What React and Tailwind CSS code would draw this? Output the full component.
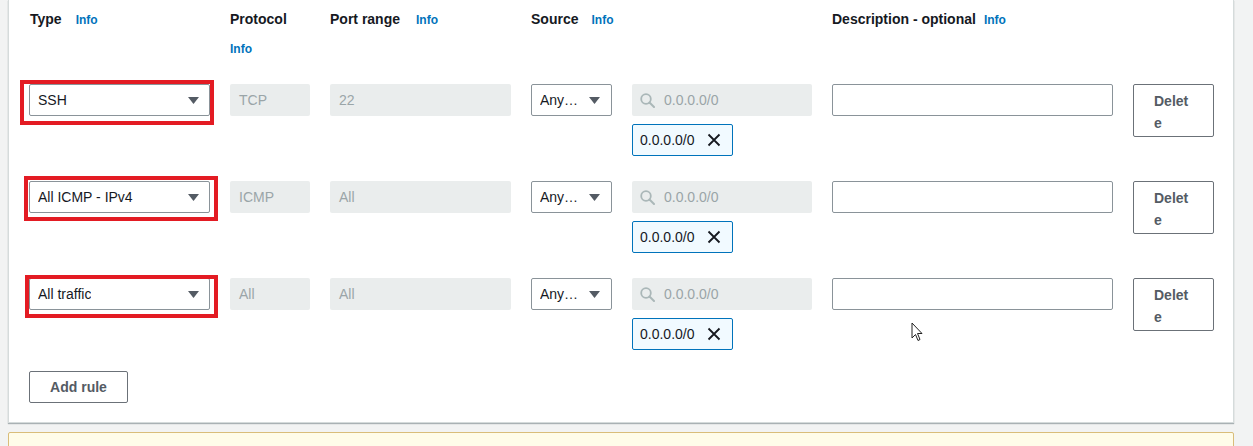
import React from 'react';

const rules = [
  { type: 'SSH', protocol: 'TCP', port: '22', red: 'left-[-9px] top-[-4px] w-[194px] h-[45px]' },
  { type: 'All ICMP - IPv4', protocol: 'ICMP', port: 'All', red: 'left-[-5px] top-[-5px] w-[194px] h-[45px]' },
  { type: 'All traffic', protocol: 'All', port: 'All', red: 'left-[-4px] top-[-3px] w-[193px] h-[43px]' },
];

const Caret = () => (
  <svg width="11" height="7" viewBox="0 0 11 7" className="shrink-0">
    <path d="M0 0 L11 0 L5.5 7 Z" fill="#545b64" />
  </svg>
);

const Info = ({ className = '' }) => (
  <span className={`text-[12px] font-bold text-[#0073bb] ${className}`}>Info</span>
);

const Select = ({ value, className = '' }) => (
  <div className={`h-[32px] flex items-center justify-between border border-[#8a9399] rounded-[2px] bg-white pl-[8px] text-[14px] text-[#16191f] ${className}`}>
    <span className="whitespace-nowrap overflow-hidden">{value}</span>
    <Caret />
  </div>
);

const Disabled = ({ value }) => (
  <div className="h-[32px] flex items-center bg-[#eaeded] rounded-[2px] pl-[9px] text-[14px] text-[#9aa5a8]">
    {value}
  </div>
);

const RuleRow = ({ rule }) => (
  <div className="grid grid-cols-[181px_80px_181px_81px_180px_281px_81px] gap-x-[20px] items-start">
    <div className="relative">
      <Select value={rule.type} className="pr-[10px]" />
      <div className={`absolute border-4 border-[#e31b23] pointer-events-none ${rule.red}`} />
    </div>
    <Disabled value={rule.protocol} />
    <Disabled value={rule.port} />
    <Select value="Any…" className="pr-[11px] gap-[4px]" />
    <div className="flex flex-col">
      <div className="h-[32px] flex items-center bg-[#eaeded] rounded-[2px] pl-[8px] text-[14px] text-[#9aa5a8]">
        <svg width="15" height="15" viewBox="0 0 15 15" className="mr-[9px]">
          <circle cx="6" cy="6" r="4.8" fill="none" stroke="#aab7b8" strokeWidth="1.8" />
          <path d="M9.5 9.5 L14 14" stroke="#aab7b8" strokeWidth="2" strokeLinecap="round" />
        </svg>
        0.0.0.0/0
      </div>
      <div className="mt-[8px] w-[101px] h-[32px] flex items-center border border-[#0073bb] rounded-[2px] bg-[#f1faff] pl-[7px] text-[14px] text-[#16191f]">
        0.0.0.0/0
        <svg width="14" height="14" viewBox="0 0 14 14" className="ml-[12px]">
          <path d="M1.5 1.5 L12.5 12.5 M12.5 1.5 L1.5 12.5" stroke="#16191f" strokeWidth="1.8" />
        </svg>
      </div>
    </div>
    <div className="h-[32px] border border-[#8a9399] rounded-[2px] bg-white" />
    <button className="h-[53px] w-[81px] border border-[#6b7178] rounded-[2px] bg-white pl-[20px] pr-[18px] pt-[5px] pb-[2px] text-left text-[14px] leading-[22px] font-bold text-[#545b64] break-all">
      Delete
    </button>
  </div>
);

export default function App() {
  return (
    <div className="min-h-[446px] bg-[#f2f3f3] pl-[8px] pr-[19px] font-['Liberation_Sans',Arial,sans-serif] leading-[20px] overflow-hidden">
      <div className="relative bg-white border-x border-b border-[#d5dbdb] shadow-[0_1px_1px_0_rgba(0,28,36,0.3)] pl-[20px] pb-[19px]">
        <div className="grid grid-cols-[181px_80px_181px_81px_180px_281px_81px] gap-x-[20px] pt-[9px] mb-[25px] text-[14px] font-bold text-[#16191f]">
          <div className="flex items-baseline pl-[1px]">
            <span>Type</span>
            <Info className="ml-[14px]" />
          </div>
          <div className="flex flex-col">
            <span>Protocol</span>
            <Info className="mt-[10px]" />
          </div>
          <div className="flex items-baseline">
            <span>Port range</span>
            <Info className="ml-[16px]" />
          </div>
          <div className="flex items-baseline col-span-2">
            <span>Source</span>
            <Info className="ml-[13px]" />
          </div>
          <div className="flex items-baseline col-span-2">
            <span>Description - optional</span>
            <Info className="ml-[8px]" />
          </div>
        </div>

        <div className="flex flex-col gap-[25px]">
          {rules.map((rule) => (
            <RuleRow key={rule.type} rule={rule} />
          ))}
        </div>

        <button className="mt-[21px] h-[32px] w-[99px] border border-[#6b7178] rounded-[2px] bg-white text-[14px] font-bold text-[#545b64]">
          Add rule
        </button>

        <svg width="13" height="21" viewBox="0 0 13 21" className="absolute left-[902px] top-[322px]">
          <path d="M1 1 L1 16 L4.5 12.5 L7 18.5 L9 17.5 L6.5 11.5 L11 11.5 Z" fill="#fff" stroke="#222" strokeWidth="1" strokeLinejoin="round" />
        </svg>
      </div>
      <div className="mt-[9px] h-[30px] border border-[#d9bd7a] rounded-[2px] bg-[#fffce9]" />
    </div>
  );
}
